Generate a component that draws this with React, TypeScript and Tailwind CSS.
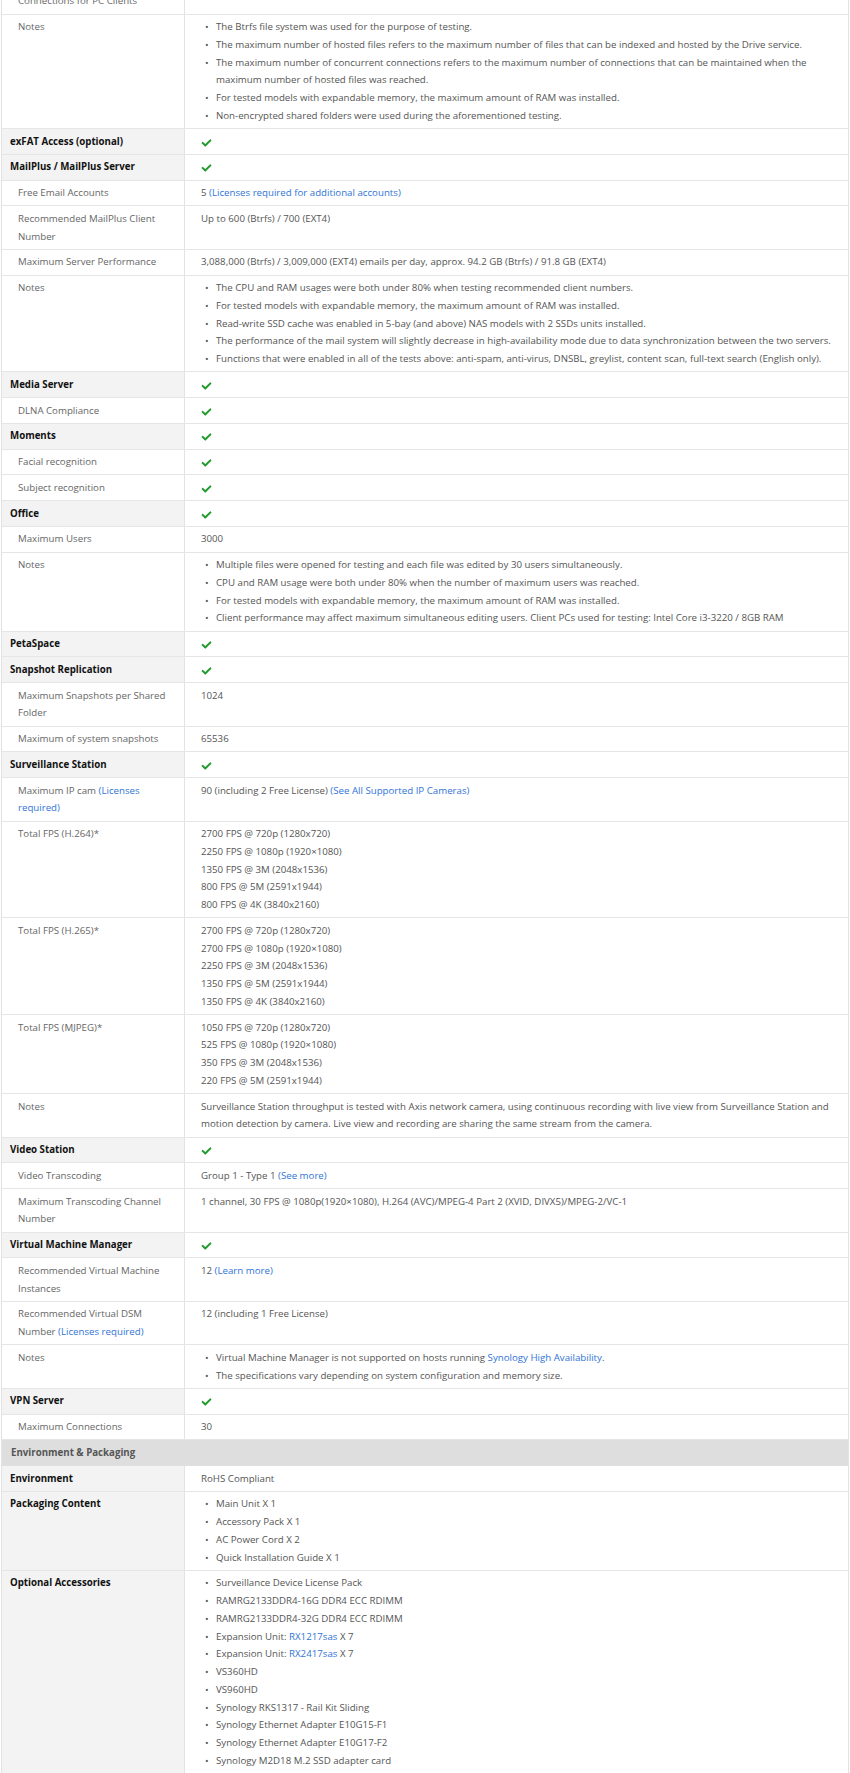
import React from 'react';
import { FaCheck } from 'react-icons/fa';

type Row = {
  label: React.ReactNode;
  value?: React.ReactNode;
  head?: boolean;
};

const Ok = () => <FaCheck className="mt-[5px] h-[10px] w-[11px] text-[#1f9a2c]" />;

const A = ({ children }: { children: React.ReactNode }) => (
  <span className="text-[#2f74d8]">{children}</span>
);

const Bullets = ({ items }: { items: React.ReactNode[] }) => (
  <ul>
    {items.map((item, i) => (
      <li key={i} className="flex">
        <span className="w-[15px] shrink-0 pl-[4px]">•</span>
        <span>{item}</span>
      </li>
    ))}
  </ul>
);

const Lines = ({ items }: { items: string[] }) => (
  <div>
    {items.map((t, i) => (
      <div key={i}>{t}</div>
    ))}
  </div>
);

const rows: Row[] = [
  { label: 'Maximum Concurrent Connections for PC Clients' },
  {
    label: 'Notes',
    value: (
      <Bullets
        items={[
          'The Btrfs file system was used for the purpose of testing.',
          'The maximum number of hosted files refers to the maximum number of files that can be indexed and hosted by the Drive service.',
          'The maximum number of concurrent connections refers to the maximum number of connections that can be maintained when the maximum number of hosted files was reached.',
          'For tested models with expandable memory, the maximum amount of RAM was installed.',
          'Non-encrypted shared folders were used during the aforementioned testing.',
        ]}
      />
    ),
  },
  { label: 'exFAT Access (optional)', head: true, value: <Ok /> },
  { label: 'MailPlus / MailPlus Server', head: true, value: <Ok /> },
  {
    label: 'Free Email Accounts',
    value: (
      <>
        5 <A>(Licenses required for additional accounts)</A>
      </>
    ),
  },
  { label: 'Recommended MailPlus Client Number', value: 'Up to 600 (Btrfs) / 700 (EXT4)' },
  {
    label: 'Maximum Server Performance',
    value: '3,088,000 (Btrfs) / 3,009,000 (EXT4) emails per day, approx. 94.2 GB (Btrfs) / 91.8 GB (EXT4)',
  },
  {
    label: 'Notes',
    value: (
      <Bullets
        items={[
          'The CPU and RAM usages were both under 80% when testing recommended client numbers.',
          'For tested models with expandable memory, the maximum amount of RAM was installed.',
          'Read-write SSD cache was enabled in 5-bay (and above) NAS models with 2 SSDs units installed.',
          'The performance of the mail system will slightly decrease in high-availability mode due to data synchronization between the two servers.',
          'Functions that were enabled in all of the tests above: anti-spam, anti-virus, DNSBL, greylist, content scan, full-text search (English only).',
        ]}
      />
    ),
  },
  { label: 'Media Server', head: true, value: <Ok /> },
  { label: 'DLNA Compliance', value: <Ok /> },
  { label: 'Moments', head: true, value: <Ok /> },
  { label: 'Facial recognition', value: <Ok /> },
  { label: 'Subject recognition', value: <Ok /> },
  { label: 'Office', head: true, value: <Ok /> },
  { label: 'Maximum Users', value: '3000' },
  {
    label: 'Notes',
    value: (
      <Bullets
        items={[
          'Multiple files were opened for testing and each file was edited by 30 users simultaneously.',
          'CPU and RAM usage were both under 80% when the number of maximum users was reached.',
          'For tested models with expandable memory, the maximum amount of RAM was installed.',
          'Client performance may affect maximum simultaneous editing users. Client PCs used for testing: Intel Core i3-3220 / 8GB RAM',
        ]}
      />
    ),
  },
  { label: 'PetaSpace', head: true, value: <Ok /> },
  { label: 'Snapshot Replication', head: true, value: <Ok /> },
  { label: 'Maximum Snapshots per Shared Folder', value: '1024' },
  { label: 'Maximum of system snapshots', value: '65536' },
  { label: 'Surveillance Station', head: true, value: <Ok /> },
  {
    label: (
      <>
        Maximum IP cam <A>(Licenses required)</A>
      </>
    ),
    value: (
      <>
        90 (including 2 Free License) <A>(See All Supported IP Cameras)</A>
      </>
    ),
  },
  {
    label: 'Total FPS (H.264)*',
    value: (
      <Lines
        items={[
          '2700 FPS @ 720p (1280x720)',
          '2250 FPS @ 1080p (1920×1080)',
          '1350 FPS @ 3M (2048x1536)',
          '800 FPS @ 5M (2591x1944)',
          '800 FPS @ 4K (3840x2160)',
        ]}
      />
    ),
  },
  {
    label: 'Total FPS (H.265)*',
    value: (
      <Lines
        items={[
          '2700 FPS @ 720p (1280x720)',
          '2700 FPS @ 1080p (1920×1080)',
          '2250 FPS @ 3M (2048x1536)',
          '1350 FPS @ 5M (2591x1944)',
          '1350 FPS @ 4K (3840x2160)',
        ]}
      />
    ),
  },
  {
    label: 'Total FPS (MJPEG)*',
    value: (
      <Lines
        items={[
          '1050 FPS @ 720p (1280x720)',
          '525 FPS @ 1080p (1920×1080)',
          '350 FPS @ 3M (2048x1536)',
          '220 FPS @ 5M (2591x1944)',
        ]}
      />
    ),
  },
  {
    label: 'Notes',
    value:
      'Surveillance Station throughput is tested with Axis network camera, using continuous recording with live view from Surveillance Station and motion detection by camera. Live view and recording are sharing the same stream from the camera.',
  },
  { label: 'Video Station', head: true, value: <Ok /> },
  {
    label: 'Video Transcoding',
    value: (
      <>
        Group 1 - Type 1 <A>(See more)</A>
      </>
    ),
  },
  {
    label: 'Maximum Transcoding Channel Number',
    value: '1 channel, 30 FPS @ 1080p(1920×1080), H.264 (AVC)/MPEG-4 Part 2 (XVID, DIVX5)/MPEG-2/VC-1',
  },
  { label: 'Virtual Machine Manager', head: true, value: <Ok /> },
  {
    label: 'Recommended Virtual Machine Instances',
    value: (
      <>
        12 <A>(Learn more)</A>
      </>
    ),
  },
  {
    label: (
      <>
        Recommended Virtual DSM Number <A>(Licenses required)</A>
      </>
    ),
    value: '12 (including 1 Free License)',
  },
  {
    label: 'Notes',
    value: (
      <Bullets
        items={[
          <>
            Virtual Machine Manager is not supported on hosts running <A>Synology High Availability</A>.
          </>,
          'The specifications vary depending on system configuration and memory size.',
        ]}
      />
    ),
  },
  { label: 'VPN Server', head: true, value: <Ok /> },
  { label: 'Maximum Connections', value: '30' },
];

const envRows: Row[] = [
  { label: 'Environment', head: true, value: 'RoHS Compliant' },
  {
    label: 'Packaging Content',
    head: true,
    value: <Bullets items={['Main Unit X 1', 'Accessory Pack X 1', 'AC Power Cord X 2', 'Quick Installation Guide X 1']} />,
  },
  {
    label: 'Optional Accessories',
    head: true,
    value: (
      <Bullets
        items={[
          'Surveillance Device License Pack',
          'RAMRG2133DDR4-16G DDR4 ECC RDIMM',
          'RAMRG2133DDR4-32G DDR4 ECC RDIMM',
          <>
            Expansion Unit: <A>RX1217sas</A> X 7
          </>,
          <>
            Expansion Unit: <A>RX2417sas</A> X 7
          </>,
          'VS360HD',
          'VS960HD',
          'Synology RKS1317 - Rail Kit Sliding',
          'Synology Ethernet Adapter E10G15-F1',
          'Synology Ethernet Adapter E10G17-F2',
          'Synology M2D18 M.2 SSD adapter card',
        ]}
      />
    ),
  },
];

function SpecRow({ row }: { row: Row }) {
  return (
    <div className="grid grid-cols-[183px_1fr] border-b border-[#e6e6e6]">
      <div
        className={
          row.head
            ? 'border-r border-[#e3e3e3] bg-[#f3f3f3] py-[3.5px] pl-[8px] pr-[12px] font-bold text-[#111]'
            : 'border-r border-[#e3e3e3] bg-white py-[3.5px] pl-[16px] pr-[14px] text-[#666]'
        }
      >
        {row.label}
      </div>
      <div className="py-[3.5px] pl-[16px] pr-[14px] text-[#555]">{row.value}</div>
    </div>
  );
}

export default function App() {
  return (
    <div className="min-h-screen bg-white">
      <div className="-mt-[29px] ml-[1px] mr-[1px] border-x border-[#e2e2e2] font-['Open_Sans',sans-serif] text-[9.7px] leading-[17.75px]">
        {rows.map((r, i) => (
          <SpecRow key={i} row={r} />
        ))}
        <div className="border-b border-[#e0e0e0] bg-[#dedede] px-[9px] py-[3.5px] font-bold text-[#555]">
          Environment &amp; Packaging
        </div>
        {envRows.map((r, i) => (
          <SpecRow key={i} row={r} />
        ))}
      </div>
    </div>
  );
}
